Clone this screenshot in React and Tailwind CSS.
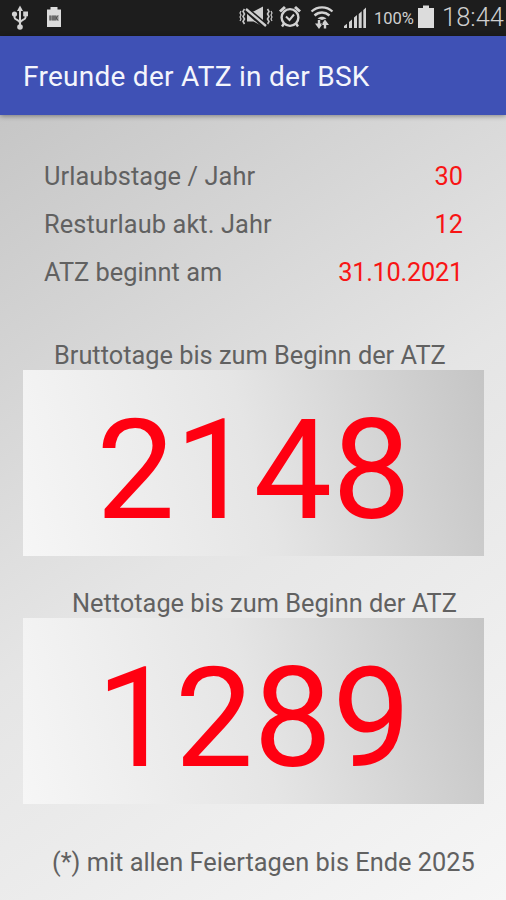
const rows = [
  {
    label: "Urlaubstage / Jahr",
    value: "30",
    labelClass: "tracking-[0.1px]",
    valueClass: "",
  },
  {
    label: "Resturlaub akt. Jahr",
    value: "12",
    labelClass: "tracking-[0.1px]",
    valueClass: "",
  },
  {
    label: "ATZ beginnt am",
    value: "31.10.2021",
    labelClass: "",
    valueClass: "tracking-[-0.25px]",
  },
];

const UsbIcon = () => (
  <svg width="18" height="26" viewBox="0 0 18 26" fill="none">
    <g stroke="#d2d2d2" strokeWidth="2">
      <path d="M9 5v17" />
      <path d="M3.5 9v3.5c0 2.5 5.5 2.5 5.5 5.5" />
      <path d="M14.5 9v3.5c0 2.5-5.5 2.5-5.5 5.5" />
    </g>
    <path d="M9 0.5l3 5.5H6z" fill="#d2d2d2" />
    <circle cx="3.5" cy="9" r="2.6" fill="#d2d2d2" />
    <rect x="12.2" y="6.500" width="4.800" height="4.800" fill="#d2d2d2" />
    <circle cx="9" cy="22" r="2.800" fill="#d2d2d2" />
  </svg>
);

const BatteryNoteIcon = () => (
  <svg width="16" height="22" viewBox="0 0 16 22">
    <path d="M4.5 1h7v2.5H15V21H1V3.5h3.5z" fill="#dcdcdc" />
    <rect x="3.5" y="9.500" width="9" height="5" fill="#8b8b8b" />
    <path d="M4 9.500v5M7 9.500v5M9 9.500v5M12 9.500l-2 2.500 2 2.500" stroke="#4d4d4d" fill="none" />
  </svg>
);

const MuteIcon = () => (
  <svg width="34" height="24" viewBox="0 0 34 24" fill="none">
    <g stroke="#c8c8c8" strokeWidth="1.6">
      <path d="M5.500 4l-1.500 2.500 1.500 2.500-1.500 2.500 1.500 2.500-1.500 2.500 1.500 2.500" />
      <path d="M2 6L1 8l1 2-1 2 1 2-1 2" strokeWidth="1.2" />
      <path d="M28.500 4l1.500 2.500-1.500 2.500 1.500 2.500-1.500 2.500 1.500 2.500-1.500 2.500" />
      <path d="M32 6l1 2-1 2 1 2-1 2 1 2" strokeWidth="1.2" />
    </g>
    <path d="M8 6.500h6.500L24 1.500v20L14.500 16.500H8z" fill="#cfcfcf" />
    <path d="M7 6L25 22" stroke="#1d1d1d" strokeWidth="3" />
    <path d="M7 3.500L27 20.500" stroke="#1d1d1d" strokeWidth="4.500" />
    <path d="M7 4L27 21" stroke="#cfcfcf" strokeWidth="2.400" />
  </svg>
);

const AlarmIcon = () => (
  <svg width="24" height="24" viewBox="0 0 24 24" fill="none" stroke="#d2d2d2">
    <circle cx="12" cy="12.5" r="8.4" strokeWidth="2.4" />
    <path d="M2 6.5L7 2M22 6.5L17 2" strokeWidth="3" />
    <path d="M8 11.5l3.5 3.5L16 9.5" strokeWidth="2" />
    <path d="M6 18.5l-2 3M18 18.5l2 3" strokeWidth="2.4" />
  </svg>
);

const WifiIcon = () => (
  <svg width="24" height="26" viewBox="0 0 24 26" fill="none" stroke="#d2d2d2">
    <path d="M1.500 6.500c6-5.500 15-5.500 21 0" strokeWidth="2.200" />
    <path d="M4.500 10.500c4.500-4 10.500-4 15 0" strokeWidth="2.400" />
    <path d="M7.500 13.500c3-2.500 6-2.500 9 0l-4.500 1.500z" fill="#d2d2d2" stroke="none" />
    <path d="M9 15v6M15 23.500v-5" strokeWidth="2.4" />
    <path d="M5 18.500h8l-4 5.500zM11 20h8l-4-5.500z" fill="#d2d2d2" stroke="none" />
  </svg>
);

const SignalIcon = () => (
  <svg width="24" height="22" viewBox="0 0 24 22" fill="#d2d2d2">
    <path d="M1 19l3-2.3V21H1zM6 15l3-2.5V21H6zM11 10.5l3-2.5v13h-3zM15.7 7l3-2.7V21h-3zM20.3 3L23 .5V21h-2.7z" />
  </svg>
);

const BatteryIcon = () => (
  <svg width="18" height="24" viewBox="0 0 18 24">
    <path d="M6 0.5h6V3h5v20H1V3h5z" fill="#dcdcdc" />
  </svg>
);

const StatusBar = () => {
  return (
    <div className="flex h-9 items-start bg-[#1d1d1d] text-[#cfcfcf]">
      <div className="flex flex-1 items-start pl-[11px]">
        <div className="pt-[5px]">
          <UsbIcon />
        </div>
        <div className="pt-[6px] pl-[17px]">
          <BatteryNoteIcon />
        </div>
      </div>

      <div className="flex items-start">
        <div className="pt-[5px]">
          <MuteIcon />
        </div>
        <div className="pt-[5px] pl-[5px]">
          <AlarmIcon />
        </div>
        <div className="pt-[5px] pl-[8px]">
          <WifiIcon />
        </div>
        <div className="pt-[7px] pl-[9px]">
          <SignalIcon />
        </div>
        <span className="w-[50px] pl-[7px] text-[16.5px] leading-[37px] whitespace-nowrap">
          100%
        </span>
        <div className="pt-[5px]">
          <BatteryIcon />
        </div>
        <span className="w-[71px] pl-[7px] text-[25.5px] leading-[35px] font-light whitespace-nowrap">
          18:44
        </span>
      </div>
    </div>
  );
};

const Counter = ({ value }) => {
  return (
    <div className="mr-[22px] ml-[23px] flex h-[186px] items-center justify-center bg-[linear-gradient(75deg,#f6f6f6_0%,#e5e5e5_50%,#c5c5c5_100%)] pt-[13px]">
      <span className="text-[140px] leading-none text-[#ff0011]">{value}</span>
    </div>
  );
};

const App = () => {
  return (
    <div className="flex h-[900px] w-[506px] flex-col overflow-hidden font-['Roboto',sans-serif]">
      <StatusBar />

      <header className="z-10 flex h-[79px] shrink-0 items-center bg-[#3f51b5] pt-[2px] pl-[23px] shadow-[0_1px_5px_rgba(0,0,0,0.4)]">
        <h1 className="text-[28px] leading-none tracking-[0.27px] text-[#f4f5fc]">
          Freunde der ATZ in der BSK
        </h1>
      </header>

      <main className="flex-1 bg-[linear-gradient(145deg,#c6c6c6_0%,#e5e5e5_50%,#f6f6f6_100%)] pt-[37px] text-[25.35px] text-[#616161]">
        {rows.map((row) => (
          <div
            className="flex h-12 items-center justify-between pr-[43px] pl-[44px]"
            key={row.label}
          >
            <span className={row.labelClass}>{row.label}</span>
            <span className={`${row.valueClass} text-[#f81515]`}>
              {row.value}
            </span>
          </div>
        ))}

        <p className="mt-[43px] h-[31px] pl-[54px] leading-[32px]">
          Bruttotage bis zum Beginn der ATZ
        </p>
        <Counter value="2148" />

        <p className="mt-[31px] h-[31px] pl-[72px] leading-[33px]">
          Nettotage bis zum Beginn der ATZ
        </p>
        <Counter value="1289" />

        <p className="mt-[42px] h-[31px] pl-[52px] leading-[33px]">
          (*) mit allen Feiertagen bis Ende 2025
        </p>
      </main>
    </div>
  );
};

export default App;
